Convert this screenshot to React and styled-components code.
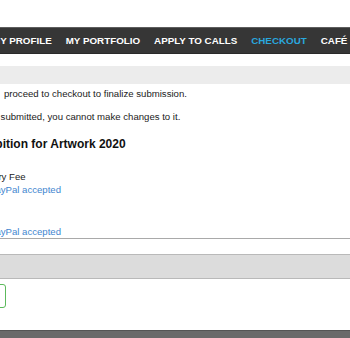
import React from "react";
import styled, { createGlobalStyle } from "styled-components";

const GlobalStyle = createGlobalStyle`
  html, body {
    margin: 0;
    padding: 0;
    background: #ffffff;
    overflow: hidden;
  }
  body {
    font-family: "Liberation Sans", Arial, sans-serif;
    color: #222222;
  }
`;

// Page is a crop of a wider layout, so some rows start left of the window
const Page = styled.div`
  width: 350px;
  height: 338px;
  display: flex;
  flex-direction: column;
  overflow: hidden;
`;

const TopStrip = styled.div`
  height: 27px;
  background: #ffffff;
  flex-shrink: 0;
`;

const NavBar = styled.nav`
  height: 25px;
  background: #363636;
  border-top: 1px solid #5e5e5e;
  border-bottom: 1px solid #2a2a2a;
  display: flex;
  align-items: center;
  gap: 14px;
  margin-left: -8px;
  white-space: nowrap;
  flex-shrink: 0;
`;

const NavItem = styled.a`
  font-size: 9.8px;
  font-weight: 700;
  color: ${(p) => (p.$active ? "#2aa7de" : "#ffffff")};
  text-decoration: none;
`;

const Crumbs = styled.div`
  height: 18px;
  margin-top: 12px;
  background: #ececec;
  flex-shrink: 0;
`;

const Content = styled.div`
  display: flex;
  flex-direction: column;
  margin-left: -30px;
  white-space: nowrap;
`;

const Notice = styled.p`
  margin: ${(p) => p.$top}px 0 0 ${(p) => p.$indent}px;
  font-size: 9.6px;
  line-height: 12px;
  color: #222222;
`;

const Heading = styled.h2`
  margin: 14px 0 0 0;
  font-size: 12px;
  line-height: 14px;
  font-weight: 700;
  color: #111111;
`;

const FeeList = styled.div`
  display: flex;
  flex-direction: column;
  margin-top: 19px;
  border-bottom: 1px solid #a9a9a9;
  margin-right: -30px;
`;

const FeeLabel = styled.div`
  font-size: 9.6px;
  line-height: 13px;
  color: #222222;
  padding-left: 14px;
`;

const FeeNote = styled.div`
  font-size: 9.6px;
  line-height: 13px;
  color: #3f86cf;
  padding-left: 19px;
  margin-top: ${(p) => p.$top || 0}px;
`;

const TotalBar = styled.div`
  height: 23px;
  margin-top: 15px;
  background: #dcdcdc;
  border-top: 1px solid #b9b9b9;
  border-bottom: 1px solid #b9b9b9;
  flex-shrink: 0;
`;

const ActionRow = styled.div`
  margin-top: 5px;
  display: flex;
  flex-shrink: 0;
`;

const CheckoutButton = styled.button`
  width: 60px;
  height: 24px;
  margin-left: -54px;
  border: 1.5px solid #5cba5c;
  border-radius: 3px;
  background: #ffffff;
  font-family: inherit;
  font-size: 10px;
`;

const Footer = styled.footer`
  margin-top: 22px;
  height: 8px;
  background: #6a6a6a;
  border-top: 1px solid #555555;
  flex-shrink: 0;
`;

const navItems = [
  { label: "MY PROFILE" },
  { label: "MY PORTFOLIO" },
  { label: "APPLY TO CALLS" },
  { label: "CHECKOUT", active: true },
  { label: "CAFÉ MEMBERSHIP" },
];

const App = () => {
  return (
    <>
      <GlobalStyle />
      <Page>
        <TopStrip />
        <NavBar>
          {navItems.map((item) => (
            <NavItem key={item.label} $active={item.active}>
              {item.label}
            </NavItem>
          ))}
        </NavBar>
        <Crumbs />
        <Content>
          <Notice $top={4} $indent={34}>
            proceed to checkout to finalize submission.
          </Notice>
          <Notice $top={11} $indent={5}>
            Once submitted, you cannot make changes to it.
          </Notice>
          <Heading>Exhibition for Artwork 2020</Heading>
          <FeeList>
            <FeeLabel>Entry Fee</FeeLabel>
            <FeeNote>PayPal accepted</FeeNote>
            <FeeNote $top={29}>PayPal accepted</FeeNote>
          </FeeList>
        </Content>
        <TotalBar />
        <ActionRow>
          <CheckoutButton />
        </ActionRow>
        <Footer />
      </Page>
    </>
  );
};

export default App;
